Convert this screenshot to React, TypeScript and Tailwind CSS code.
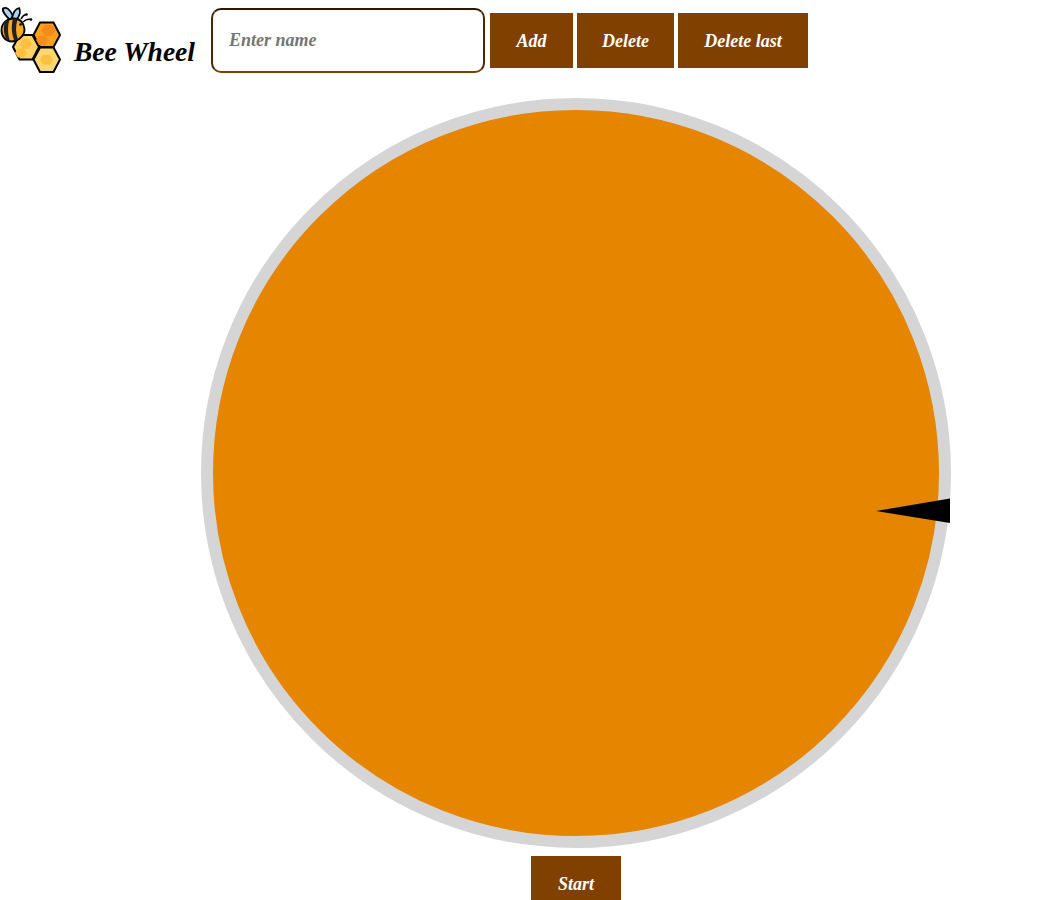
const font = "font-['Liberation_Serif',serif] italic font-bold";

function Logo() {
  return (
    <svg width="62" height="74" viewBox="0 0 62 74" className="shrink-0">
      <g stroke="#000" strokeWidth="2" strokeLinejoin="round">
        <polygon points="13,47 19.500,35 32.500,35 39,47 32.500,59.500 19.500,59.500" fill="#fed264" />
        <polygon points="20,44 23,39 29,39 32,44 29,49 23,49" fill="#fcc040" stroke="none" />
        <polygon points="15,53 18,48.500 24,48.500 27,53 24,57.500 18,57.500" fill="#fcc040" stroke="none" />
        <polygon points="33.500,35 40,22.500 53.500,22.500 60,35 53.500,47 40,47" fill="#faa21d" />
        <polygon points="41,30 45,25 52,25 56,30 52,36 45,36" fill="#f58a1f" stroke="none" />
        <polygon points="36,40 39,36 45,36 48,40 45,45 39,45" fill="#f58a1f" stroke="none" />
        <polygon points="33.500,59.500 40,47.500 53.500,47.500 60,59.500 53.500,72 40,72" fill="#fed86f" />
        <polygon points="40,59.500 43,55 50,55 53,59.500 50,64.500 43,64.500" fill="#fcc040" stroke="none" />
      </g>
      <path d="M10 20 C6 16 2 12 3 8.500 C6 6.500 10 9 13 16 Z" fill="#a8d4f5" stroke="#000" strokeWidth="1.800" />
      <path d="M12 18 C13 13 15 9 19 8 C21 11 20 16 16 20 Z" fill="#a8d4f5" stroke="#000" strokeWidth="1.800" />
      <path d="M21 19 C22 17 23 15 26 14.500 M23 22 C25 20 28 19 31 19.500" fill="none" stroke="#000" strokeWidth="1.500" />
      <circle cx="26.500" cy="14.500" r="1.300" /><circle cx="31" cy="19.500" r="1.300" />
      <path d="M1.500 30 C1.500 23 7 18.500 14 18.500 C20 18.500 24 23 24.500 29 C25 34 20 41 12 41.500 C6 41.500 1.500 37 1.500 30 Z" fill="#f9a825" stroke="#000" strokeWidth="1.800" />
      <path d="M5 21.500 C3 27 3.500 34 6.500 39.500 L10 41 C7.500 34 7.500 26 9.500 19.500 Z M13 18.500 C11 26 11.500 34 14.500 41 L18 39.500 C15.500 33 15.500 26 17.500 19.500 Z" fill="#222" />
      <circle cx="20.500" cy="24.500" r="1.300" />
    </svg>
  );
}

function Btn({ label, w }: { label: string; w: string }) {
  return (
    <button className={`${w} h-[55px] shrink-0 bg-[#804000] text-white text-[18px] ${font} leading-none`}>
      {label}
    </button>
  );
}

export default function App() {
  return (
    <div className="h-[900px] overflow-hidden bg-white">
      <header className="flex h-[98px] items-start">
        <div className="w-[74px] shrink-0">
          <Logo />
        </div>
        <h1 className={`mt-[33px] w-[137px] shrink-0 text-[27.5px] leading-[38px] text-black whitespace-nowrap ${font}`}>
          Bee Wheel
        </h1>
        <input
          placeholder="Enter name"
          className={`mt-[8px] h-[65px] w-[274px] shrink-0 rounded-[10px] border-2 border-t-[#2e1700] border-x-[#4f2800] border-b-[#804000] px-[16px] text-[18px] ${font} outline-none placeholder:text-[#757575]`}
        />
        <div className="ml-[5px] mt-[13px] flex gap-[4px]">
          <Btn label="Add" w="w-[83px]" />
          <Btn label="Delete" w="w-[97px]" />
          <Btn label="Delete last" w="w-[130px]" />
        </div>
      </header>
      <main className="ml-[201px] flex w-[750px] flex-col items-center">
        <div className="relative h-[750px] w-[750px]">
          <div className="h-full w-full rounded-full border-[12px] border-[#d5d5d5] bg-[#e58500]" />
          <svg width="74" height="26" viewBox="0 0 74 26" className="absolute left-[675px] top-[400px]">
            <polygon points="0,13 74,0.500 74,25" fill="#000" />
          </svg>
        </div>
        <button className={`mt-[8px] h-[55px] w-[90px] shrink-0 bg-[#804000] text-white text-[18px] ${font} leading-none`}>
          Start
        </button>
      </main>
    </div>
  );
}
